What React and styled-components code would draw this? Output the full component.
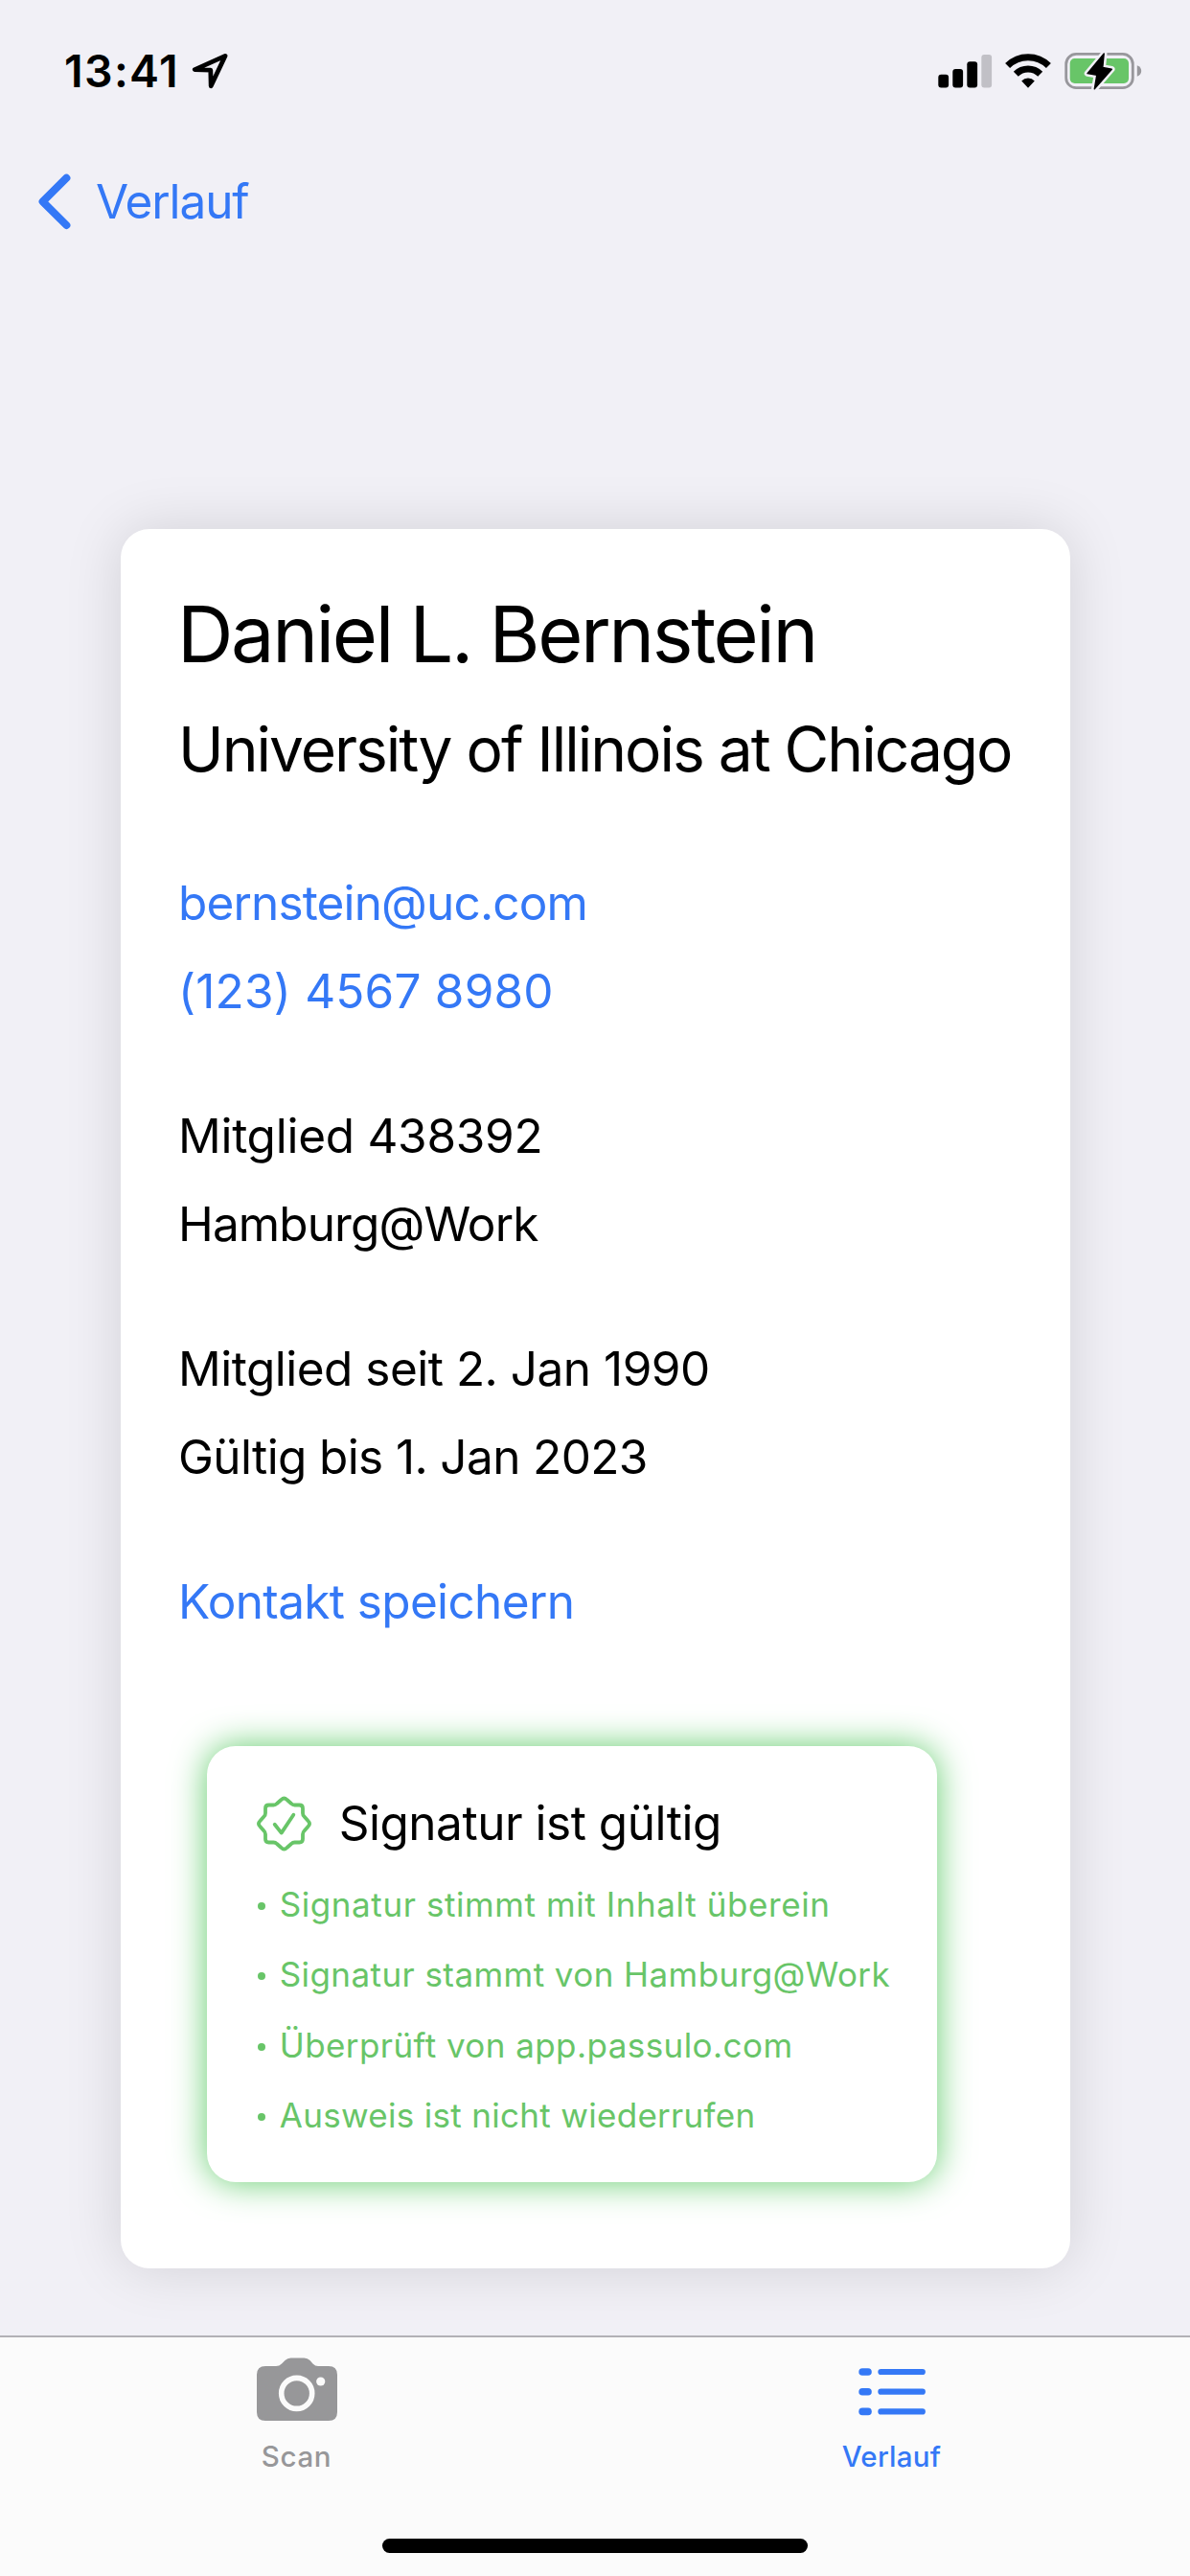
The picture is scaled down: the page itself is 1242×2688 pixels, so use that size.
import React from "react";
import styled, { createGlobalStyle } from "styled-components";

const BLUE = "#3478f6";
const GREEN = "#68c568";
const GREY = "#979799";
const BACKDROP = "#f1f0f6";
const BAR = "#fbfbfb";

const GlobalStyle = createGlobalStyle`
  * { box-sizing: border-box; }
  body { margin: 0; background: ${BACKDROP}; }
  svg { display: block; flex: none; overflow: visible; }
`;

const Screen = styled.div`
  width: 1242px;
  height: 2688px;
  display: flex;
  flex-direction: column;
  background: ${BACKDROP};
  color: #000;
  font-family: Inter, Roboto, "Liberation Sans", sans-serif;
  overflow: hidden;
`;

const StatusBar = styled.header`
  height: 150px;
  padding: 44px 50px 0 67px;
  display: flex;
  justify-content: space-between;
`;

const StatusGroup = styled.div`
  height: 60px;
  display: flex;
  align-items: center;
  gap: ${(p) => p.$gap || 0}px;
`;

const Time = styled.span`
  width: 133px;
  font-size: 46.5px;
  font-weight: 600;
  line-height: 60px;
  letter-spacing: 1.35px;
`;

const NavBar = styled.nav`
  height: 402px;
  padding: 30px 0 0 40px;
`;

const BackButton = styled.a`
  display: flex;
  align-items: center;
  gap: 26px;
  height: 60px;
  color: ${BLUE};
`;

const Label = styled.span`
  font-size: 49.5px;
  line-height: 60px;
  letter-spacing: ${(p) => p.$track || 0}px;
  white-space: nowrap;
`;

const Main = styled.main`
  flex: 1;
  padding: 0 125px 0 126px;
`;

const Card = styled.section`
  height: 1815px;
  padding: 60px 60px 0;
  border-radius: 30px;
  background: #fff;
  box-shadow: 0 0 60px rgba(0, 0, 0, 0.13);
`;

const Name = styled.h1`
  margin: 0 0 0 -1px;
  font-size: 81px;
  font-weight: 400;
  line-height: 100px;
  letter-spacing: -2.4px;
  word-spacing: -1.7px;
  white-space: nowrap;
`;

const Org = styled.h2`
  margin: 30px 0 0;
  font-size: 64px;
  font-weight: 400;
  line-height: 80px;
  letter-spacing: -2px;
  white-space: nowrap;
`;

const Group = styled.div`
  display: flex;
  flex-direction: column;
  gap: 31px;
  margin-top: 90px;
`;

const Line = styled.span`
  font-size: 49.5px;
  line-height: 61px;
  letter-spacing: ${(p) => p.$track || 0}px;
  color: ${(p) => (p.$link ? BLUE : "#000")};
  white-space: nowrap;
`;

const Signature = styled.section`
  width: 762px;
  height: 455px;
  margin: 120px 0 0 30px;
  padding: 49px 0 0 52px;
  border-radius: 30px;
  background: #fff;
  box-shadow: 0 0 36px rgb(98, 204, 108);
`;

const SignatureHead = styled.div`
  display: flex;
  align-items: center;
  gap: 28.7px;
  height: 62px;
`;

const Checks = styled.ul`
  margin: 0;
  padding: 17px 0 0 0.7px;
  list-style: none;
`;

const Check = styled.li`
  display: flex;
  align-items: center;
  gap: 15px;
  height: 73.5px;
  color: ${GREEN};
  font-size: 35px;
  letter-spacing: ${(p) => p.$track || 0}px;
  white-space: nowrap;

  &::before {
    content: "";
    width: 8px;
    height: 8px;
    margin-top: 4px;
    border-radius: 50%;
    background: ${GREEN};
  }
`;

const TabBar = styled.footer`
  height: 251px;
  border-top: 2px solid #b2b1b6;
  background: ${BAR};
`;

const Tabs = styled.nav`
  height: 210px;
  display: grid;
  grid-template-columns: 1fr 1fr;
`;

const Tab = styled.a`
  display: flex;
  flex-direction: column;
  align-items: center;
  padding: 21px 2px 0 0;
  color: ${(p) => (p.$active ? BLUE : GREY)};
`;

const TabLabel = styled.span`
  margin-top: 17px;
  font-size: 29.5px;
  font-weight: 500;
  line-height: 40px;
  letter-spacing: ${(p) => p.$track || 0}px;
`;

const HomeIndicator = styled.div`
  width: 444px;
  height: 15px;
  margin: 0 auto;
  border-radius: 8px;
  background: #000;
`;

const LocationIcon = () => (
  <svg width="38" height="38" viewBox="0 0 38 38" fill="none" stroke="#000" strokeWidth="4.8" strokeLinejoin="round">
    <path d="M35 3.4 L3.3 17.6 L19.8 18.2 L20.2 34.8 Z" />
  </svg>
);

const SignalIcon = () => (
  <svg width="56" height="40" viewBox="0 0 56 40">
    <rect x="0.3" y="23.8" width="10.8" height="13.8" rx="3" />
    <rect x="15.3" y="18" width="10.8" height="19.6" rx="3" />
    <rect x="30.3" y="10.3" width="10.8" height="27.3" rx="3" />
    <rect x="45.3" y="3" width="10.8" height="34.6" rx="3" fill="#c1c0c6" />
  </svg>
);

const WifiIcon = () => (
  <svg width="48" height="40" viewBox="0 0 48 40" fill="none" stroke="#000" strokeWidth="7">
    <path d="M2.6 14.6 A30.3 30.3 0 0 1 45.4 14.6" />
    <path d="M11.3 23.3 A18 18 0 0 1 36.7 23.3" />
    <path d="M24 37.8 L17.2 30.4 A9.6 9.6 0 0 1 30.8 30.4 Z" fill="#000" stroke="none" />
  </svg>
);

const BOLT = "M41.2 2 L24 22.6 L33.8 24.2 L31.3 38.8 L49.3 18.2 L39.8 16.4 Z";

const BatteryIcon = () => (
  <svg width="81" height="40" viewBox="0 0 81 40">
    <rect x="1.7" y="2.4" width="69.6" height="35.3" rx="10.5" fill="none" stroke="#98979c" strokeWidth="2.8" />
    <rect x="5.7" y="7" width="61.3" height="26" rx="5" fill={GREEN} />
    <path d="M75.8 14.2 Q80.2 16 80.2 20 Q80.2 24 75.8 25.8 Z" fill="#98979c" />
    <path d={BOLT} fill={BACKDROP} stroke={BACKDROP} strokeWidth="6.5" strokeLinejoin="round" />
    <path d={BOLT} fill="#000" stroke="#000" strokeWidth="1.4" strokeLinejoin="round" />
  </svg>
);

const BackIcon = () => (
  <svg width="34" height="58" viewBox="0 0 34 58" fill="none" stroke={BLUE} strokeWidth="8" strokeLinecap="round" strokeLinejoin="round">
    <path d="M29.4 4.7 L4.6 29.3 L29.4 54" />
  </svg>
);

const SealIcon = () => (
  <svg width="57" height="57" viewBox="-28.5 -29 57 57" fill="none" stroke={GREEN} strokeWidth="3.8" strokeLinecap="round" strokeLinejoin="round">
    <path d="M-3 -25 Q0 -28 3 -25 L7.5 -21 Q9 -19.5 11 -19.5 L16 -19.5 Q19.5 -19.5 19.5 -16 L19.5 -11 Q19.5 -9 21 -7.5 L25 -3 Q28 0 25 3 L21 7.5 Q19.5 9 19.5 11 L19.5 16 Q19.5 19.5 16 19.5 L11 19.5 Q9 19.5 7.5 21 L3 25 Q0 28 -3 25 L-7.5 21 Q-9 19.5 -11 19.5 L-16 19.5 Q-19.5 19.5 -19.5 16 L-19.5 11 Q-19.5 9 -21 7.5 L-25 3 Q-28 0 -25 -3 L-21 -7.5 Q-19.5 -9 -19.5 -11 L-19.5 -16 Q-19.5 -19.5 -16 -19.5 L-11 -19.5 Q-9 -19.5 -7.5 -21 Z" />
    <path d="M-9.8 0.8 L-2.8 9.6 L9.8 -9.3" />
  </svg>
);

const CameraIcon = () => (
  <svg width="84" height="66" viewBox="0 0 84 66">
    <path
      fill={GREY}
      d="M9 9 H20 Q23.5 9 26 6.5 L29.5 3 Q32 0.5 35.5 0.5 H49.5 Q53 0.5 55.5 3 L58.5 6.5 Q61 9 64 9 H75 Q84 9 84 18 V57 Q84 66 75 66 H9 Q0 66 0 57 V18 Q0 9 9 9 Z"
    />
    <circle cx="41.7" cy="37.4" r="16" fill="none" stroke={BAR} strokeWidth="5.6" />
    <circle cx="66.7" cy="25" r="4.6" fill={BAR} />
  </svg>
);

const ListIcon = () => (
  <svg width="70" height="66" viewBox="0 0 70 66" stroke={BLUE} strokeLinecap="round">
    {[15, 35.7, 56.4].map((y) => (
      <g key={y}>
        <path d={`M4.1 ${y} H10`} strokeWidth="7.6" />
        <path d={`M23.4 ${y} H66.8`} strokeWidth="6.2" />
      </g>
    ))}
  </svg>
);

const CHECKS = [
  { text: "Signatur stimmt mit Inhalt überein", track: 0.59 },
  { text: "Signatur stammt von Hamburg@Work", track: 0.43 },
  { text: "Überprüft von app.passulo.com", track: 0.43 },
  { text: "Ausweis ist nicht wiederrufen", track: 0.31 },
];

export default function App() {
  return (
    <Screen>
      <GlobalStyle />
      <StatusBar>
        <StatusGroup>
          <Time>13:41</Time>
          <LocationIcon />
        </StatusGroup>
        <StatusGroup $gap={14}>
          <SignalIcon />
          <WifiIcon />
          <BatteryIcon />
        </StatusGroup>
      </StatusBar>
      <NavBar>
        <BackButton>
          <BackIcon />
          <Label $track={-1.1}>Verlauf</Label>
        </BackButton>
      </NavBar>
      <Main>
        <Card>
          <Name>Daniel L. Bernstein</Name>
          <Org>University of Illinois at Chicago</Org>
          <Group>
            <Line $link $track={-0.85}>bernstein@uc.com</Line>
            <Line $link $track={0.2}>(123) 4567 8980</Line>
          </Group>
          <Group>
            <Line $track={-0.27}>Mitglied 438392</Line>
            <Line $track={-0.88}>Hamburg@Work</Line>
          </Group>
          <Group>
            <Line $track={-0.5}>Mitglied seit 2. Jan 1990</Line>
            <Line $track={-0.62}>Gültig bis 1. Jan 2023</Line>
          </Group>
          <Group>
            <Line $link $track={-0.63}>Kontakt speichern</Line>
          </Group>
          <Signature>
            <SignatureHead>
              <SealIcon />
              <Label $track={-0.48}>Signatur ist gültig</Label>
            </SignatureHead>
            <Checks>
              {CHECKS.map((c) => (
                <Check key={c.text} $track={c.track}>{c.text}</Check>
              ))}
            </Checks>
          </Signature>
        </Card>
      </Main>
      <TabBar>
        <Tabs>
          <Tab>
            <CameraIcon />
            <TabLabel $track={0.6}>Scan</TabLabel>
          </Tab>
          <Tab $active>
            <ListIcon />
            <TabLabel $track={0.27}>Verlauf</TabLabel>
          </Tab>
        </Tabs>
        <HomeIndicator />
      </TabBar>
    </Screen>
  );
}
